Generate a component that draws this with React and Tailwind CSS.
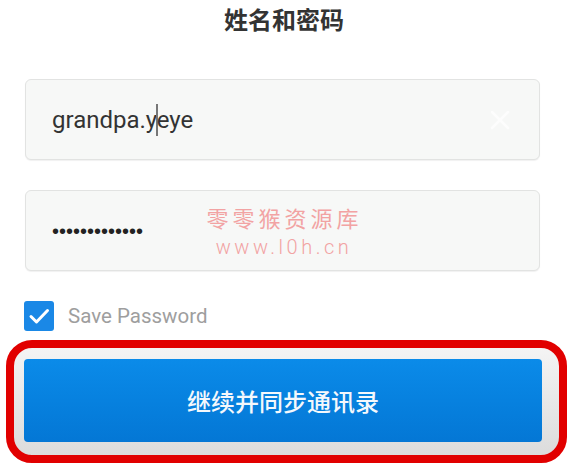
import React from 'react';

const cjk = "font-['Noto_Sans_CJK_SC','Noto_Sans',sans-serif]";

const CheckIcon = () => (
  <svg width="30" height="30" viewBox="0 0 30 30" fill="none">
    <path d="M7 15.5l5.5 5.5L23.5 9.5" stroke="#fff" strokeWidth="3" strokeLinecap="round" strokeLinejoin="round" />
  </svg>
);

export default function App() {
  return (
    <div className="w-[568px] h-[466px] overflow-hidden bg-white font-['Roboto','Liberation_Sans',sans-serif]">
      {/* TITLE */}
      <h1 className={`${cjk} h-[36px] pt-[3px] text-center text-[24px] leading-[32px] font-bold text-[#333333]`}>
        姓名和密码
      </h1>

      {/* USERNAME */}
      <div className="mt-[43px] ml-[25px] w-[515px] h-[81px] flex items-center pl-[26px] pr-[28px] bg-[#f7f8f7] border border-[#e2e3e2] rounded-[6px] shadow-[0_1px_1px_rgba(0,0,0,0.06)]">
        <div className="flex-1 flex items-center text-[24px] text-[#333333] leading-none">
          <span>grandpa.y</span>
          <span className="w-[1.5px] h-[32px] bg-[#777] -mx-[1px]"></span>
          <span>eye</span>
        </div>
        <svg width="22" height="22" viewBox="0 0 22 22" fill="none">
          <path d="M3 3l16 16M19 3L3 19" stroke="#fdfdfd" strokeWidth="2.5" strokeLinecap="round" />
        </svg>
      </div>

      {/* PASSWORD */}
      <div className="relative mt-[30px] ml-[25px] w-[515px] h-[81px] flex items-center pl-[26px] bg-[#f7f8f7] border border-[#e2e3e2] rounded-[6px] shadow-[0_1px_1px_rgba(0,0,0,0.06)]">
        <span className="font-['Liberation_Sans',sans-serif] text-[20px] text-[#222] leading-none">•••••••••••••</span>
        {/* watermark */}
        <div className="absolute inset-0 flex flex-col items-center justify-center gap-[9px] pt-[2px] text-[#f2a3a3] pointer-events-none">
          <span className={`${cjk} text-[22px] leading-none tracking-[4px] pl-[4px]`}>零零猴资源库</span>
          <span className="text-[20px] font-light leading-none tracking-[3.5px] pl-[3px]">www.l0h.cn</span>
        </div>
      </div>

      {/* SAVE PASSWORD */}
      <div className="mt-[30px] ml-[24px] h-[30px] flex items-center gap-[14px]">
        <div className="w-[30px] h-[30px] rounded-[3px] bg-[#1a88e6] flex items-center justify-center">
          <CheckIcon />
        </div>
        <span className="text-[20.5px] text-[#9e9e9e] leading-none">Save Password</span>
      </div>

      {/* CONTINUE BUTTON (highlighted) */}
      <div className="mt-[9px] ml-[6px] w-[561px] h-[123px] border-[8px] border-[#e10000] rounded-[26px] bg-gradient-to-b from-[#f4f4f4] to-[#dcdcdc] pl-[10px] pr-[17px] pt-[11px] pb-[13px]">
        <button className={`${cjk} w-full h-full rounded-[4px] bg-gradient-to-b from-[#0b8be9] to-[#0477d5] text-[#f4f8fc] text-[24px] font-medium`}>
          继续并同步通讯录
        </button>
      </div>
    </div>
  );
}
